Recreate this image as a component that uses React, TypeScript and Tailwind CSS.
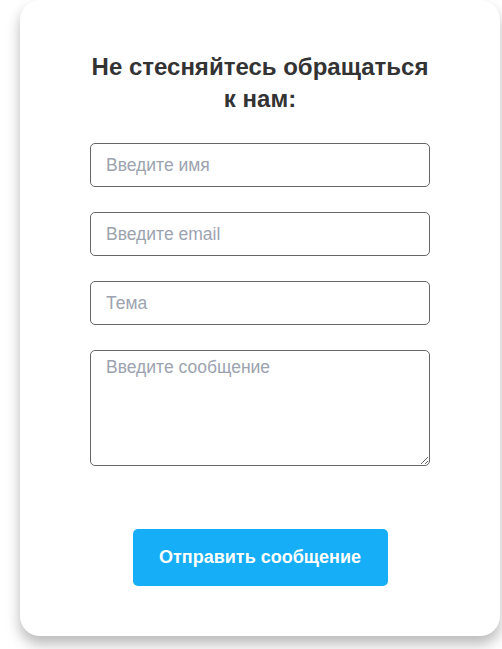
export default function App() {
  return (
    <div className="min-h-[649px] bg-white pl-[20px] pr-[2px] pb-[13px] font-['Liberation_Sans',Arial,sans-serif]">
      <div className="flex h-[636px] flex-col items-center rounded-[20px] bg-white pt-[51px] shadow-[0_8px_14px_rgba(0,0,0,0.28)]">
        <h2 className="w-[340px] text-center text-[24px] font-bold leading-[32px] text-[#333]">
          Не стесняйтесь обращаться к нам:
        </h2>
        <form className="mt-[28px] flex w-[340px] flex-col gap-[25px]">
          <input
            type="text"
            placeholder="Введите имя"
            className="h-[44px] rounded-[5px] border border-[#666] px-[15px] text-[17.5px] text-[#333] placeholder:text-[#9ca3af] outline-none"
          />
          <input
            type="email"
            placeholder="Введите email"
            className="h-[44px] rounded-[5px] border border-[#666] px-[15px] text-[17.5px] text-[#333] placeholder:text-[#9ca3af] outline-none"
          />
          <input
            type="text"
            placeholder="Тема"
            className="h-[44px] rounded-[5px] border border-[#666] px-[15px] text-[17.5px] text-[#333] placeholder:text-[#9ca3af] outline-none"
          />
          <textarea
            placeholder="Введите сообщение"
            className="h-[116px] rounded-[5px] border border-[#666] px-[15px] py-[3px] text-[17.5px] text-[#333] placeholder:text-[#9ca3af] outline-none"
          />
        </form>
        <button
          type="button"
          className="mt-[63px] h-[57px] w-[255px] rounded-[5px] bg-[#16aef6] text-[18px] font-bold text-white"
        >
          Отправить сообщение
        </button>
      </div>
    </div>
  );
}
